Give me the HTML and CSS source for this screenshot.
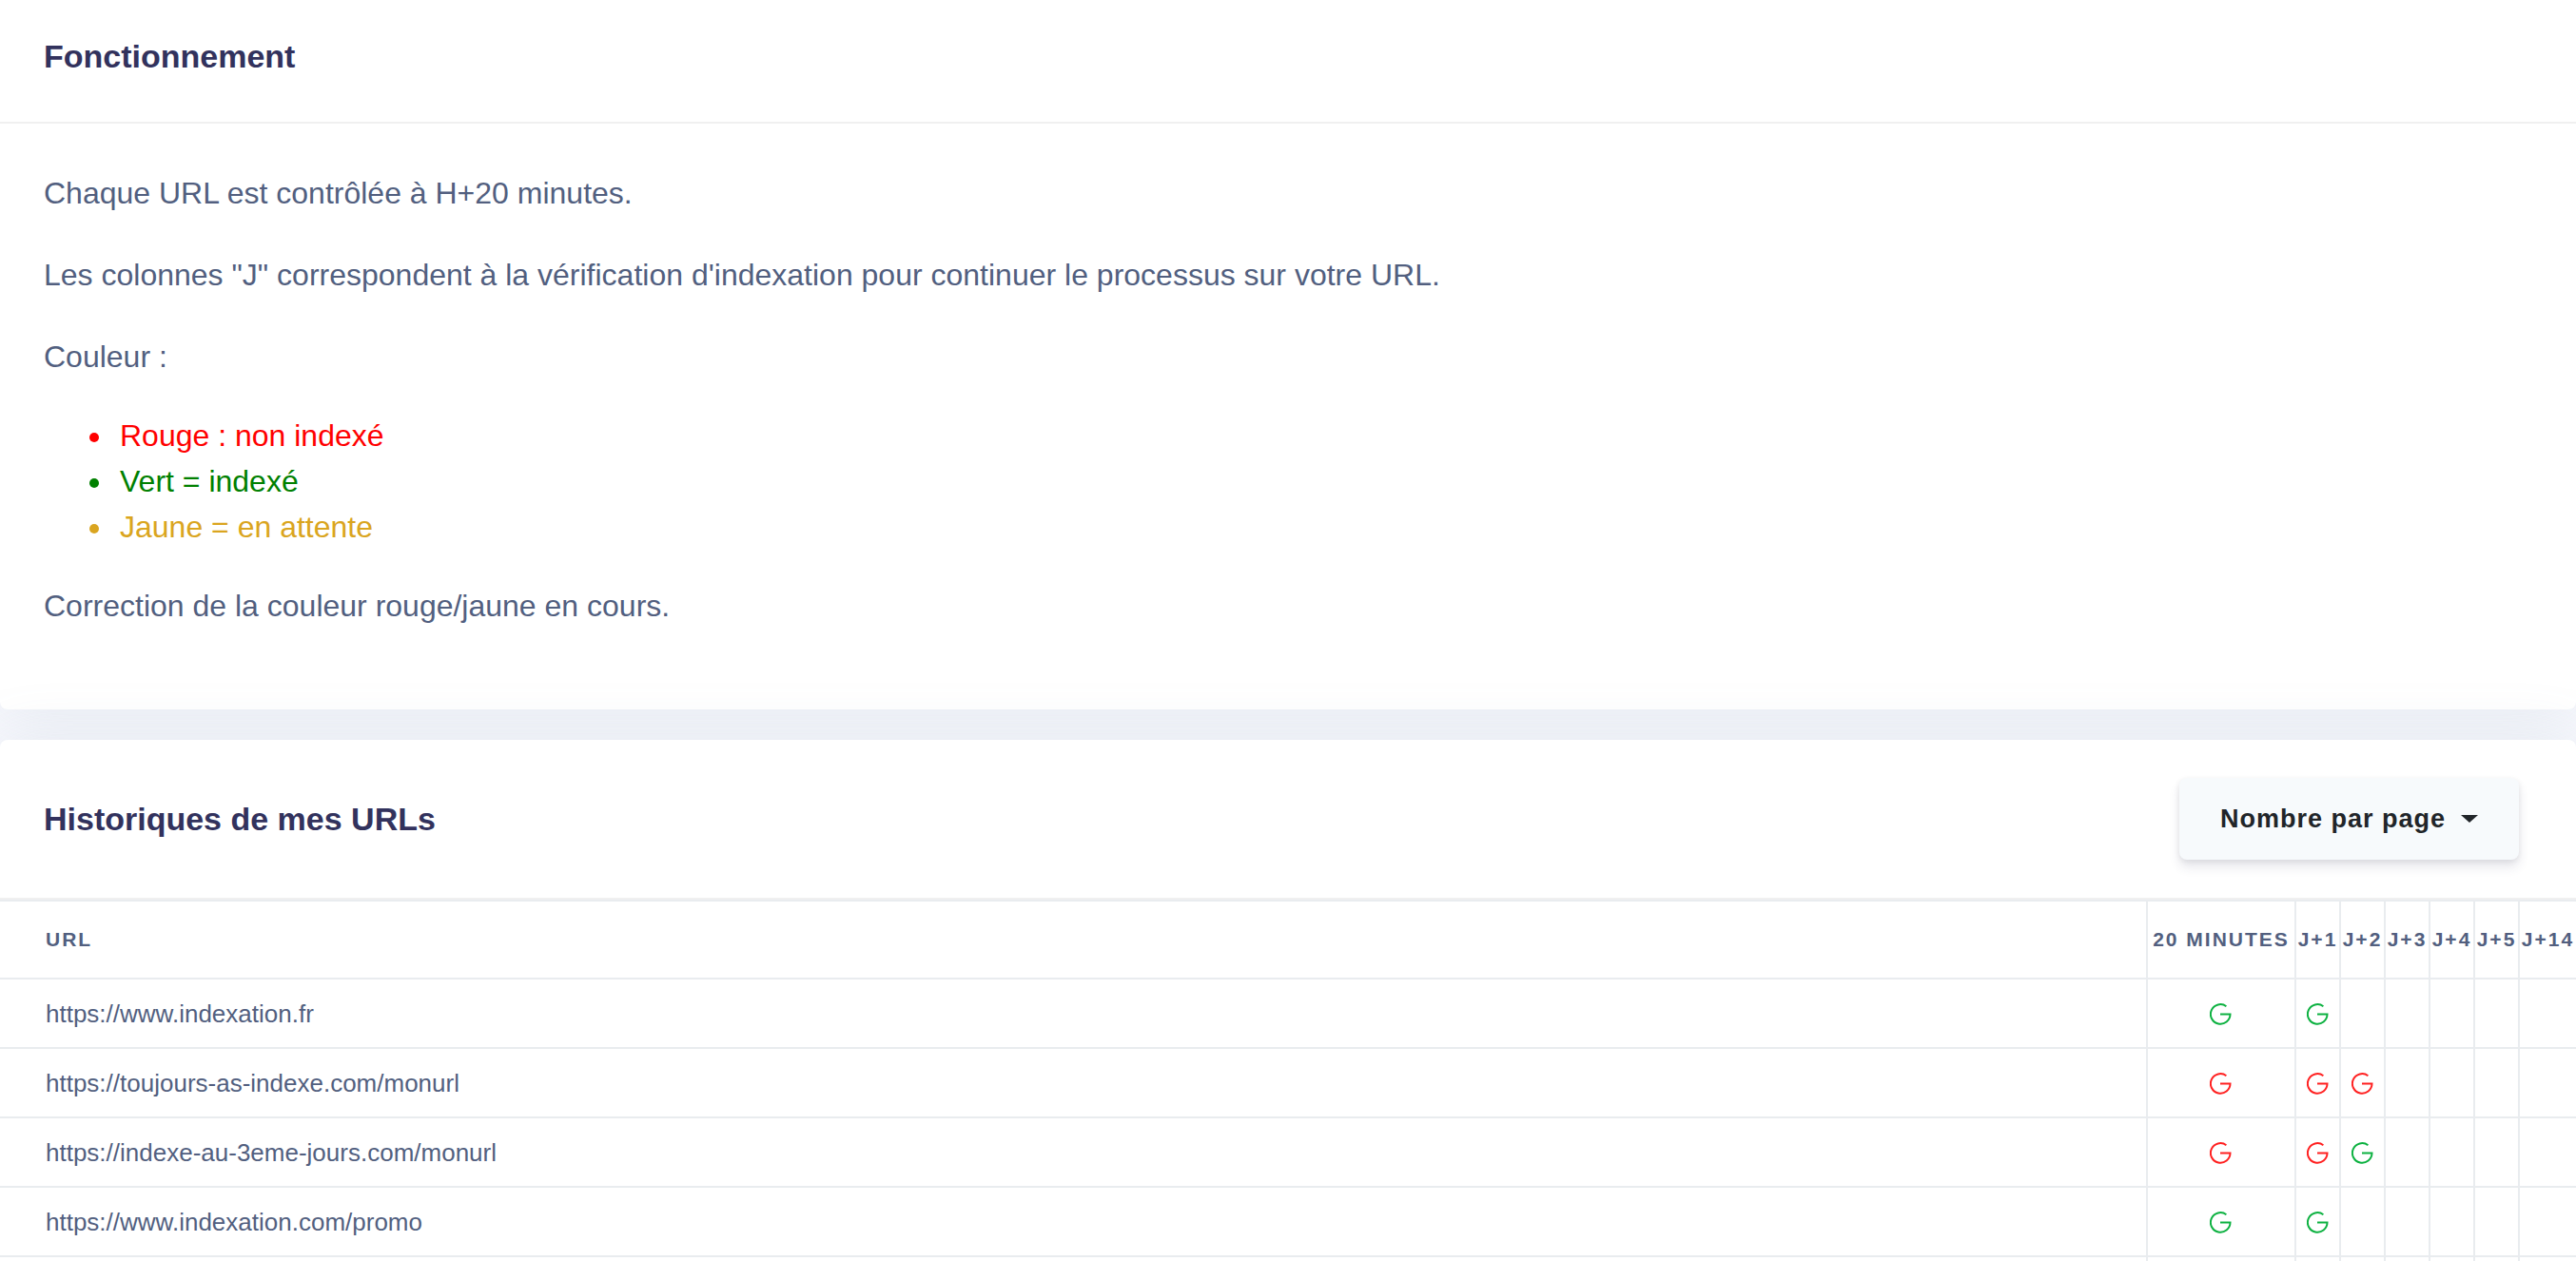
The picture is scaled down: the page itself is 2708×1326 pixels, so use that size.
FILE: index.html
```html
<!DOCTYPE html>
<html lang="fr">
<head>
  <meta charset="UTF-8" />
  <meta name="viewport" content="width=device-width, initial-scale=1.0"/>
  <title>Historiques de mes URLs</title>
  <link rel="stylesheet" href="styles.css">
</head>
<body>

  <!-- Google icon, reused in the table -->
  <svg class="sprite" aria-hidden="true">
    <symbol id="icon-google" viewBox="0 0 24 24">
      <path d="M17.4 4.2A10.3 10.3 0 1 0 21.5 12.5H11" fill="none" stroke="currentColor" stroke-width="2"/>
    </symbol>
  </svg>

  <main class="page">
    <section class="card card-first">
      <div class="card-header">
        <h3>Fonctionnement</h3>
      </div>
      <div class="card-body">
        <p>Chaque URL est contrôlée à H+20 minutes.</p>
        <p>Les colonnes "J" correspondent à la vérification d'indexation pour continuer le processus sur votre URL.</p>
        <p>Couleur :</p>
        <ul>
          <li class="rouge">Rouge : non indexé</li>
          <li class="vert">Vert = indexé</li>
          <li class="jaune">Jaune = en attente</li>
        </ul>
        <p>Correction de la couleur rouge/jaune en cours.</p>
      </div>
    </section>

    <section class="card">
      <div class="card-header card-header-actions">
        <h3>Historiques de mes URLs</h3>
        <button type="button" class="dropdown-btn" aria-haspopup="true">Nombre par page</button>
      </div>

      <table>
        <thead>
          <tr>
            <th class="col-url">URL</th>
            <th class="col-minutes">20 minutes</th>
            <th class="col-day">J+1</th>
            <th class="col-day">J+2</th>
            <th class="col-day">J+3</th>
            <th class="col-day">J+4</th>
            <th class="col-day">J+5</th>
            <th class="col-last">J+14</th>
          </tr>
        </thead>
        <tbody>
          <tr>
            <td>https://www.indexation.fr</td>
            <td><svg class="google ok"><use href="#icon-google"/></svg></td>
            <td><svg class="google ok"><use href="#icon-google"/></svg></td>
            <td></td>
            <td></td>
            <td></td>
            <td></td>
            <td></td>
          </tr>
          <tr>
            <td>https://toujours-as-indexe.com/monurl</td>
            <td><svg class="google ko"><use href="#icon-google"/></svg></td>
            <td><svg class="google ko"><use href="#icon-google"/></svg></td>
            <td><svg class="google ko"><use href="#icon-google"/></svg></td>
            <td></td>
            <td></td>
            <td></td>
            <td></td>
          </tr>
          <tr>
            <td>https://indexe-au-3eme-jours.com/monurl</td>
            <td><svg class="google ko"><use href="#icon-google"/></svg></td>
            <td><svg class="google ko"><use href="#icon-google"/></svg></td>
            <td><svg class="google ok"><use href="#icon-google"/></svg></td>
            <td></td>
            <td></td>
            <td></td>
            <td></td>
          </tr>
          <tr>
            <td>https://www.indexation.com/promo</td>
            <td><svg class="google ok"><use href="#icon-google"/></svg></td>
            <td><svg class="google ok"><use href="#icon-google"/></svg></td>
            <td></td>
            <td></td>
            <td></td>
            <td></td>
            <td></td>
          </tr>
          <tr>
            <td></td>
            <td></td>
            <td></td>
            <td></td>
            <td></td>
            <td></td>
            <td></td>
            <td></td>
          </tr>
        </tbody>
      </table>
    </section>
  </main>

</body>
</html>
```

FILE: styles.css
```css
* {
  box-sizing: border-box;
}

body {
  margin: 0;
  font-family: "Liberation Sans", Arial, sans-serif;
  font-size: 32px;
  line-height: 48px;
  color: #525f7f;
  background-color: #f8f9fe;
}

.sprite {
  display: none;
}

.page {
  height: 100vh;
  overflow: hidden;
}

.card {
  background-color: #fff;
  border-radius: 8px;
  box-shadow: 0 0 64px rgba(136, 152, 170, 0.15);
  margin-bottom: 32px;
}

.card-first {
  border-top-left-radius: 0;
  border-top-right-radius: 0;
}

.card-header {
  padding: 34px 46px 43px;
  border-bottom: 2px solid #f0f0f0;
}

.card-header-actions {
  display: flex;
  align-items: center;
  justify-content: space-between;
  padding: 40px 60px 40px 46px;
}

h3 {
  margin: 0;
  font-size: 34px;
  line-height: 51px;
  font-weight: bold;
  color: #32325d;
}

.card-body {
  padding: 46px 46px 50px;
}

p {
  margin: 0 0 32px;
  line-height: 54px;
}

ul {
  margin: 0 0 32px;
  padding-left: 74px;
}

li {
  padding-left: 6px;
}

.rouge {
  color: red;
}

.vert {
  color: green;
}

.jaune {
  color: goldenrod;
}

.dropdown-btn {
  display: flex;
  align-items: center;
  gap: 16px;
  height: 86px;
  padding: 0 43px;
  border: none;
  border-radius: 8px;
  background-color: #f7fafc;
  color: #212529;
  font-family: inherit;
  font-size: 27px;
  font-weight: bold;
  letter-spacing: 1px;
  cursor: pointer;
  box-shadow: 0 8px 12px rgba(50, 50, 93, 0.11), 0 2px 6px rgba(0, 0, 0, 0.08);
}

.dropdown-btn::after {
  content: "";
  border-top: 8px solid;
  border-left: 9px solid transparent;
  border-right: 9px solid transparent;
}

table {
  width: 100%;
  table-layout: fixed;
  border-spacing: 0;
}

th, td {
  padding: 0;
  text-align: center;
  vertical-align: middle;
  border-left: 2px solid #e9ecef;
}

th {
  height: 84px;
  border-top: 2px solid #e9ecef;
  border-bottom: 2px solid #e9ecef;
  font-size: 21px;
  letter-spacing: 2px;
  text-transform: uppercase;
  white-space: nowrap;
}

td {
  height: 73px;
  border-bottom: 2px solid #e9ecef;
  font-size: 26px;
  line-height: 40px;
}

th:first-child, td:first-child {
  padding-left: 48px;
  text-align: left;
  border-left: none;
}

.col-minutes {
  width: 156px;
}

.col-day {
  width: 47px;
}

.col-last {
  width: 61px;
}

.google {
  display: block;
  width: 24px;
  height: 24px;
  margin: 0 auto;
}

.ok {
  color: #0cb140;
}

.ko {
  color: #ff2020;
}
```
